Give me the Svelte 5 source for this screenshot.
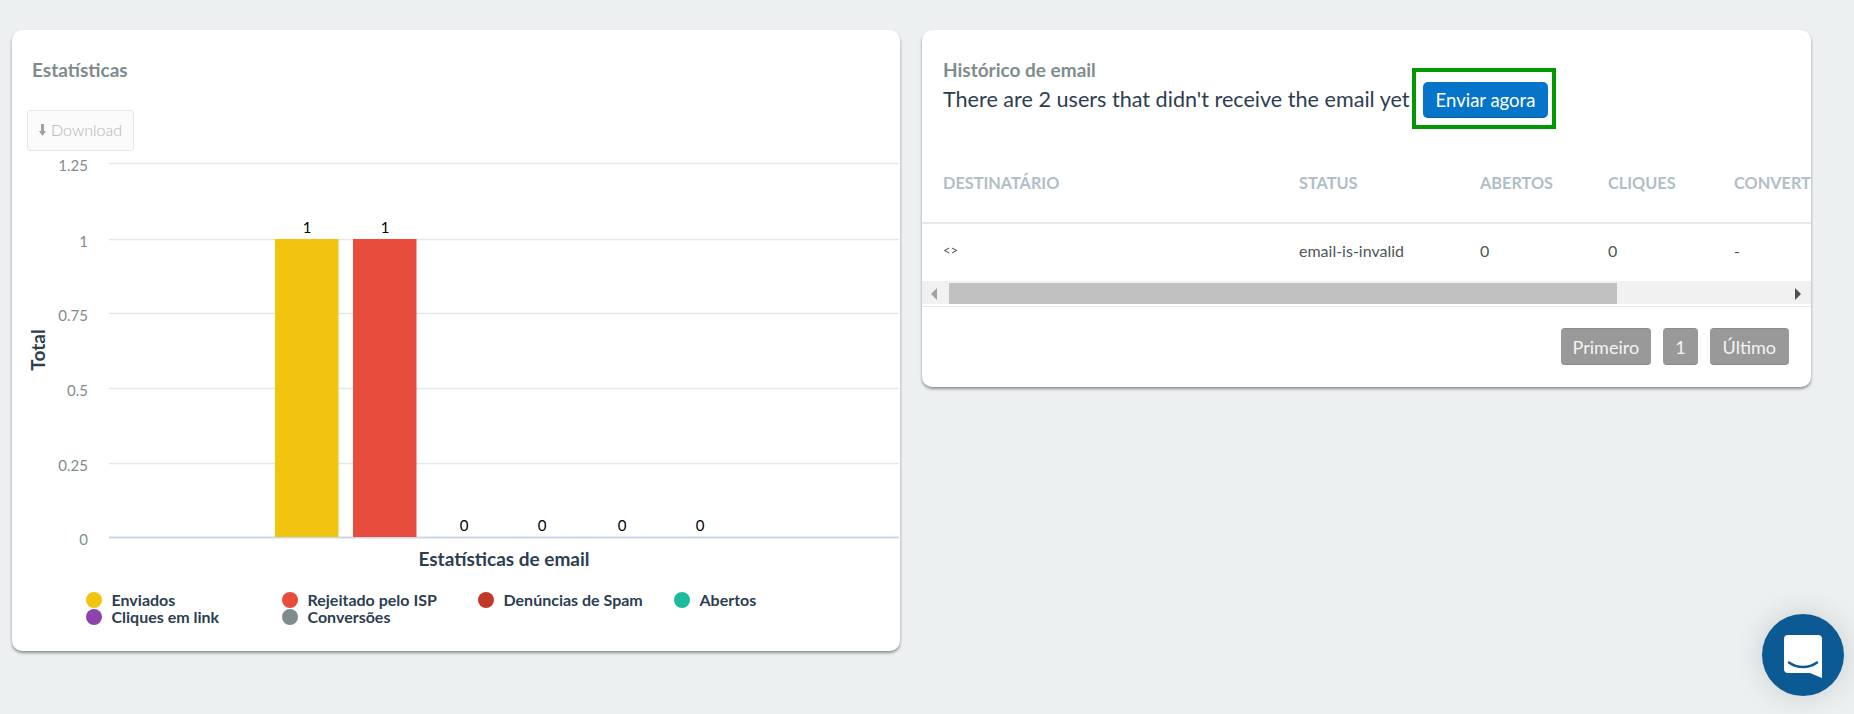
<script>
  const ticks = [
    { label: '1.25', y: 11 },
    { label: '1', y: 87 },
    { label: '0.75', y: 161 },
    { label: '0.5', y: 236 },
    { label: '0.25', y: 311 },
    { label: '0', y: 385 }
  ];
  const bars = [
    { x: 263, color: '#f1c40f', value: 1 },
    { x: 341, color: '#e74c3c', value: 1 },
    { x: 420, color: '#c0392b', value: 0 },
    { x: 498, color: '#1abc9c', value: 0 },
    { x: 578, color: '#8e44ad', value: 0 },
    { x: 656, color: '#7f8c8d', value: 0 }
  ];
  const legend = [
    { name: 'Enviados', color: '#f1c40f' },
    { name: 'Rejeitado pelo ISP', color: '#e74c3c' },
    { name: 'Denúncias de Spam', color: '#c0392b' },
    { name: 'Abertos', color: '#1abc9c' },
    { name: 'Cliques em link', color: '#8e44ad' },
    { name: 'Conversões', color: '#7f8c8d' }
  ];
  const columns = ['Destinatário', 'Status', 'Abertos', 'Cliques', 'Convertidos'];
  const row = ['<>', 'email-is-invalid', '0', '0', '-'];
</script>

<main>
  <section class="card stats">
    <h2>Estatísticas</h2>
    <button class="download" type="button">
      <svg width="7" height="12" viewBox="0 0 7 12"><path d="M2 0h3v7h2l-3.5 5L0 7h2z" fill="#a0a0a0" /></svg>
      Download
    </button>
    <svg class="chart" width="888" height="425" viewBox="0 0 888 425">
      {#each ticks as t}
        <line x1="97" x2="887" y1={t.y + 0.5} y2={t.y + 0.5} stroke={t.y === 385 ? '#ccd6eb' : '#e6e6e6'} stroke-width={t.y === 385 ? 2 : 1.5} />
        <text class="tick" x="76" y={t.y + 7.5} text-anchor="end">{t.label}</text>
      {/each}
      {#each bars as b}
        {#if b.value}
          <rect x={b.x} y="87" width="63.5" height="298" fill={b.color} />
        {/if}
        <text class="value" x={b.x + 32} y={b.value ? 80.5 : 379} text-anchor="middle">{b.value}</text>
      {/each}
      <text class="axis" x="0" y="0" transform="translate(33 198) rotate(-90)" text-anchor="middle">Total</text>
      <text class="axis" x="492" y="414" text-anchor="middle">Estatísticas de email</text>
    </svg>
    <ul class="legend">
      {#each legend as item}
        <li><i style="background: {item.color}"></i>{item.name}</li>
      {/each}
    </ul>
  </section>

  <section class="card history">
    <header>
      <h3>Histórico de email</h3>
      <div class="notice">
        <span>There are 2 users that didn't receive the email yet</span>
        <div class="highlight"><button class="send" type="button">Enviar agora</button></div>
      </div>
    </header>
    <div class="table-wrap">
      <table>
        <thead>
          <tr>
            {#each columns as c}<th>{c}</th>{/each}
          </tr>
        </thead>
        <tbody>
          <tr>
            {#each row as cell, i}<td class:small={i === 0}>{cell}</td>{/each}
          </tr>
        </tbody>
      </table>
    </div>
    <div class="scrollbar">
      <div class="bar">
        <span class="tri left"></span>
        <div class="track"><div class="thumb"></div></div>
        <span class="tri right"></span>
      </div>
    </div>
    <nav class="pages">
      <button type="button">Primeiro</button>
      <button type="button">1</button>
      <button type="button">Último</button>
    </nav>
  </section>
</main>

<button class="chat" type="button" aria-label="Chat">
  <svg width="38" height="43" viewBox="0 0 38 43">
    <path d="M4 0h30a4 4 0 0 1 4 4v39l-12-5H4a4 4 0 0 1-4-4V4a4 4 0 0 1 4-4z" fill="#fff" />
    <path d="M5 27.5c8 6 20 6 28 0" fill="none" stroke="#0b5a94" stroke-width="2.5" stroke-linecap="round" />
  </svg>
</button>

<style>
  :global(body) {
    background: #ecf0f1;
    font-family: Lato, "Open Sans", sans-serif;
  }

  main {
    display: flex;
    align-items: flex-start;
    gap: 22px;
    padding: 30px 0 63px 12px;
  }

  .card {
    background: #fff;
    border-radius: 10px;
    box-shadow: 0 2px 3px rgba(0, 0, 0, 0.4);
  }

  .stats {
    width: 888px;
    height: 621px;
    box-sizing: border-box;
    padding-top: 29px;
  }

  h2 {
    margin: 0 0 0 20px;
    font-size: 19px;
    line-height: 22px;
    font-weight: 700;
    color: #7f8c8d;
  }

  .download {
    display: flex;
    align-items: center;
    justify-content: center;
    gap: 5px;
    box-sizing: border-box;
    width: 107px;
    height: 41px;
    margin: 29px 0 1px 15px;
    padding: 0 0 2px;
    background: #fbfbfb;
    border: 1px solid #e6e6e6;
    border-radius: 3px;
    font: 300 16px Lato, sans-serif;
    color: #b5b5b5;
  }

  .chart {
    display: block;
  }

  .tick {
    font-size: 15px;
    fill: #7f8c8d;
  }

  .value {
    font-size: 15px;
    fill: #000;
  }

  .axis {
    font-size: 19px;
    font-weight: 700;
    fill: #2c3e50;
  }

  .legend {
    display: grid;
    grid-template-columns: repeat(4, 196px);
    grid-auto-rows: 17px;
    margin: 14px 0 0 74px;
    padding: 0;
    list-style: none;
  }

  .legend li {
    display: flex;
    align-items: center;
    gap: 9.5px;
    font-size: 16px;
    font-weight: 700;
    color: #2c3e50;
    white-space: nowrap;
  }

  .legend i {
    width: 16px;
    height: 16px;
    border-radius: 50%;
  }

  .history {
    width: 889px;
    height: 357px;
    overflow: hidden;
  }

  header {
    padding: 30px 0 0 21px;
  }

  h3 {
    margin: 0;
    font-size: 19px;
    line-height: 20px;
    font-weight: 700;
    color: #7f8c8d;
  }

  .notice {
    display: flex;
    align-items: center;
    margin-top: -12px;
    font-size: 21.6px;
    color: #2c3e50;
  }

  .notice span {
    width: 469px;
    white-space: nowrap;
  }

  .highlight {
    box-sizing: border-box;
    width: 144px;
    height: 61px;
    padding: 10px 7px;
    border: 4px solid #009900;
  }

  .send {
    width: 125px;
    height: 36px;
    padding: 0;
    border: 0;
    border-bottom: 1px solid #0460a8;
    border-radius: 5px;
    background: #0574c9;
    color: #fff;
    font: 400 18.5px Lato, sans-serif;
  }

  .table-wrap {
    overflow: hidden;
    margin-top: 24px;
  }

  table {
    width: 1100px;
    table-layout: fixed;
    border-collapse: collapse;
  }

  th, td {
    box-sizing: border-box;
    padding: 0 0 0 21px;
    text-align: left;
    white-space: nowrap;
  }

  th:nth-child(1) { width: 356px; }
  th:nth-child(2) { width: 181px; }
  th:nth-child(3) { width: 128px; }
  th:nth-child(4) { width: 126px; }

  th {
    height: 70px;
    padding-bottom: 10px;
    border-bottom: 2px solid #e6e9ea;
    font-size: 16.3px;
    font-weight: 700;
    text-transform: uppercase;
    color: #b0bec5;
  }

  td {
    height: 58px;
    padding-bottom: 5px;
    font-size: 16px;
    color: #4f5558;
  }

  td.small {
    font-size: 13px;
  }

  .scrollbar {
    height: 26px;
    box-sizing: border-box;
    border-bottom: 1px solid #e6e6e6;
  }

  .bar {
    display: flex;
    align-items: center;
    height: 23px;
    box-sizing: border-box;
    padding-top: 2px;
    background: #f1f1f1;
  }

  .track {
    flex: 1;
    height: 100%;
  }

  .thumb {
    width: 668px;
    height: 100%;
    background: #c1c1c1;
  }

  .tri {
    width: 0;
    height: 0;
    border-top: 6px solid transparent;
    border-bottom: 6px solid transparent;
  }

  .tri.left {
    margin: 0 12px 0 9px;
    border-right: 6px solid #a3a3a3;
  }

  .tri.right {
    margin: 0 10px 0 11px;
    border-left: 6px solid #505050;
  }

  .pages {
    display: flex;
    justify-content: flex-end;
    gap: 12px;
    padding: 21px 22px 0 0;
  }

  .pages button {
    height: 37px;
    padding: 0 12px;
    border: 0;
    border-bottom: 1px solid #8a8a8a;
    border-top: 1px solid #8a8a8a;
    border-radius: 4px;
    background: #999;
    color: #f4f4f4;
    font: 400 18px Lato, sans-serif;
  }

  .pages button:last-child {
    padding: 0 13px;
  }

  .chat {
    position: fixed;
    left: 1762px;
    top: 614px;
    display: flex;
    align-items: center;
    justify-content: center;
    width: 82px;
    height: 82px;
    padding: 2px 0 0 0;
    border: 0;
    border-radius: 50%;
    background: #0b5a94;
    box-shadow: 0 0 30px rgba(0, 0, 0, 0.14);
  }
</style>
